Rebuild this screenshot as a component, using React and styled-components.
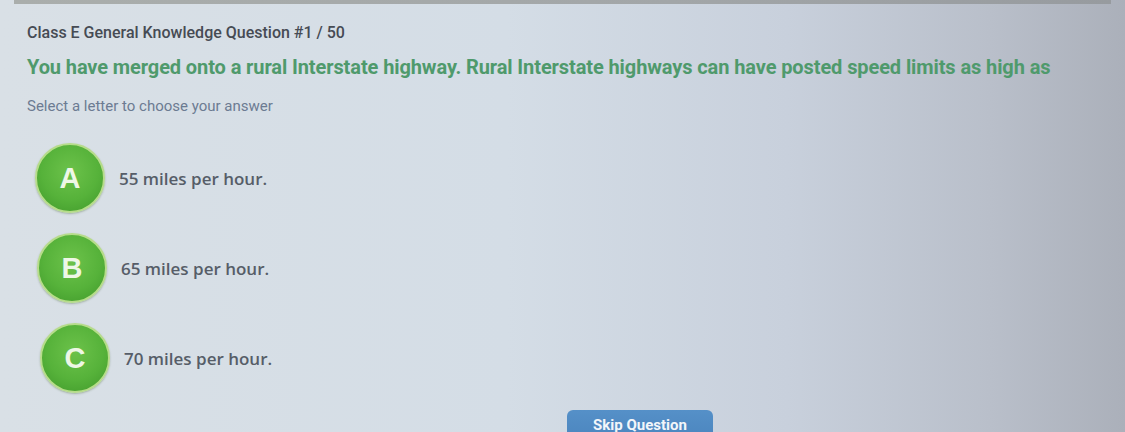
import React from 'react'
import styled, { createGlobalStyle } from 'styled-components'

const GlobalStyle = createGlobalStyle`
  html, body {
    margin: 0;
    padding: 0;
    height: 432px;
    overflow: hidden;
  }
  body {
    font-family: 'Roboto', 'Liberation Sans', sans-serif;
    background: #d4dce4;
  }
`

// whole screen, light bluish grey fading darker on the right
const Screen = styled.div`
  width: 1125px;
  height: 432px;
  overflow: hidden;
  background: linear-gradient(90deg, #d9e0e6 0%, #d4dde6 45%, #c8d0dc 70%, #b9bfca 88%, #abb0ba 100%);
  display: flex;
  flex-direction: column;

  & > * {
    flex-shrink: 0;
  }
`

// thin grey strip along the top edge
const TopStrip = styled.div`
  height: 4px;
  margin: 0 14px;
  background: linear-gradient(90deg, #aaaeac, #a2a6a8 60%, #979b9f);
`

const Content = styled.div`
  padding: 19px 0 0 27px;
  display: flex;
  flex-direction: column;
`

const Title = styled.h1`
  margin: 0;
  font-size: 16px;
  font-weight: 500;
  color: #464b54;
  line-height: 20px;
`

const Question = styled.p`
  margin: 12px 0 0;
  font-size: 20px;
  font-weight: 700;
  color: #4f9a6c;
  line-height: 24px;
  letter-spacing: -0.1px;
`

const Hint = styled.p`
  margin: 18px 0 0;
  font-size: 15px;
  color: #6c7b92;
  line-height: 18px;
`

const Answers = styled.div`
  display: flex;
  flex-direction: column;
  gap: 20px;
  margin-top: 28px;
`

const AnswerRow = styled.div`
  display: flex;
  align-items: center;
  gap: 14px;
  margin-left: ${props => props.shift}px;
`

// green glossy letter ball
const LetterBall = styled.div`
  width: 70px;
  height: 70px;
  border-radius: 50%;
  box-sizing: border-box;
  border: 2px solid #b6dc8a;
  background: radial-gradient(circle at 50% 40%, #6cc24a 0%, #56b23a 55%, #3f982a 100%);
  box-shadow: 0 1px 2px rgba(60, 90, 40, 0.35);
  display: flex;
  align-items: center;
  justify-content: center;
  color: #eef7e6;
  font-family: 'Liberation Sans', Arial, sans-serif;
  font-weight: 700;
  font-size: 29px;
`

const AnswerText = styled.span`
  font-family: 'Open Sans', 'Roboto', sans-serif;
  font-weight: 600;
  font-size: 17px;
  color: #565d68;
`

const Footer = styled.div`
  display: flex;
  padding-left: 567px;
  margin-top: 17px;
`

const SkipButton = styled.button`
  width: 146px;
  height: 34px;
  border: none;
  border-radius: 6px;
  background: linear-gradient(180deg, #5590c8, #4a84bd);
  color: #f2f6fa;
  font-family: 'Roboto', sans-serif;
  font-weight: 700;
  font-size: 15px;
  padding: 0 0 4px;
`

const answers = [
  { letter: 'A', text: '55 miles per hour.', shift: 8 },
  { letter: 'B', text: '65 miles per hour.', shift: 10 },
  { letter: 'C', text: '70 miles per hour.', shift: 13 },
]

const App = () => {
  return (
    <Screen>
      <GlobalStyle />
      <TopStrip />
      <Content>
        <Title>Class E General Knowledge Question #1 / 50</Title>
        <Question>
          You have merged onto a rural Interstate highway. Rural Interstate highways can have posted speed limits as high as
        </Question>
        <Hint>Select a letter to choose your answer</Hint>

        <Answers>
          {answers.map(a => (
            <AnswerRow key={a.letter} shift={a.shift}>
              <LetterBall>{a.letter}</LetterBall>
              <AnswerText>{a.text}</AnswerText>
            </AnswerRow>
          ))}
        </Answers>
      </Content>

      <Footer>
        <SkipButton>Skip Question</SkipButton>
      </Footer>
    </Screen>
  )
}

export default App
